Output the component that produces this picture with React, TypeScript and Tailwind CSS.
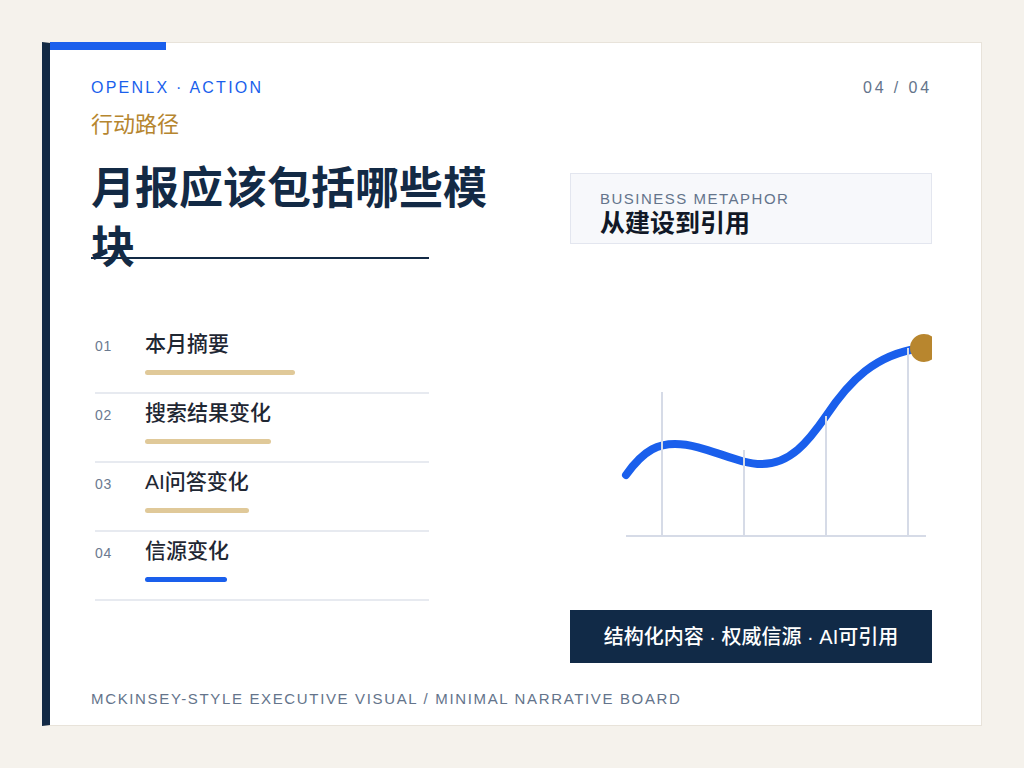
import React from "react";

const modules = [
  { n: "01", label: "本月摘要", bar: "w-[150px] bg-[#e0c999]" },
  { n: "02", label: "搜索结果变化", bar: "w-[126px] bg-[#e0c999]" },
  { n: "03", label: "AI问答变化", bar: "w-[104px] bg-[#e0c999]" },
  { n: "04", label: "信源变化", bar: "w-[82px] bg-[#1a5fec]" },
];

function GrowthChart() {
  return (
    <svg width="362" height="366" viewBox="570 244 362 366" className="block">
      <line x1="626" y1="536" x2="926" y2="536" stroke="#d6dbe7" strokeWidth="2" />
      <path
        d="M626 475 C645 448 660 444 675 444 C705 444 735 464 762 464 C790 464 808 442 826 416 C850 380 875 355 920 348"
        fill="none"
        stroke="#1a5fec"
        strokeWidth="8"
        strokeLinecap="round"
      />
      <line x1="662" y1="392" x2="662" y2="536" stroke="#d6dbe7" strokeWidth="2" />
      <line x1="744" y1="450" x2="744" y2="536" stroke="#d6dbe7" strokeWidth="2" />
      <line x1="826" y1="416" x2="826" y2="536" stroke="#d6dbe7" strokeWidth="2" />
      <line x1="908" y1="348" x2="908" y2="536" stroke="#d6dbe7" strokeWidth="2" />
      <circle cx="924" cy="348" r="14" fill="#b8862e" />
    </svg>
  );
}

export default function App() {
  return (
    <div className="min-h-screen bg-[#f5f2ec] p-[42px] font-['Liberation_Sans','Noto_Sans_CJK_SC',sans-serif]">
      <div className="relative h-[684px] w-[940px] bg-white border border-[#e8e3da] border-l-[8px] border-l-[#132a45] pl-[41px] pr-[49px] pt-[35px]">
        <div className="absolute left-0 top-[-1px] h-[8px] w-[116px] bg-[#1a5fec]" />

        <div className="flex items-start justify-between">
          <div className="text-[16px] leading-[20px] tracking-[0.14em] text-[#1a5fec]">OPENLX · ACTION</div>
          <div className="text-[16px] leading-[20px] tracking-[0.18em] text-[#64748b]">04 / 04</div>
        </div>
        <div className="mt-[12px] text-[22px] leading-[30px] text-[#b6862f]">行动路径</div>

        <div className="mt-[19px] flex justify-between">
          {/* left column */}
          <div className="w-[338px]">
            <div className="relative">
              <h1 className="w-[420px] text-[44px] leading-[59px] font-bold text-[#132a45]">
                月报应该包括哪些模块
              </h1>
              <div className="absolute left-0 top-[98px] h-[2px] w-[338px] bg-[#132a45]" />
            </div>

            <div className="ml-[4px] mt-[48px]">
              {modules.map((m) => (
                <div key={m.n} className="border-b-2 border-[#e7eaf0] pt-[5px] pb-[17px]">
                  <div className="flex items-baseline">
                    <span className="w-[50px] text-[14px] leading-[28px] tracking-[0.05em] text-[#6b7a90]">{m.n}</span>
                    <span className="text-[21px] leading-[28px] font-medium text-[#1f2733]">{m.label}</span>
                  </div>
                  <div className={`ml-[50px] mt-[10px] h-[5px] rounded-full ${m.bar}`} />
                </div>
              ))}
            </div>
          </div>

          {/* right column */}
          <div className="w-[362px]">
            <div className="mt-[14px] h-[71px] border border-[#e3e6ef] bg-[#f7f8fb] pl-[29px] pt-[15px]">
              <div className="text-[15px] leading-[20px] tracking-[0.1em] text-[#64748b]">BUSINESS METAPHOR</div>
              <div className="text-[25px] leading-[28px] font-bold text-[#111827]">从建设到引用</div>
            </div>
            <GrowthChart />
            <div className="flex h-[53px] items-center justify-center bg-[#112a47] text-[20px] font-medium text-white">
              结构化内容 · 权威信源 · AI可引用
            </div>
          </div>
        </div>

        <div className="mt-[26px] text-[15px] leading-[20px] tracking-[0.11em] text-[#64748b]">
          MCKINSEY-STYLE EXECUTIVE VISUAL / MINIMAL NARRATIVE BOARD
        </div>
      </div>
    </div>
  );
}
